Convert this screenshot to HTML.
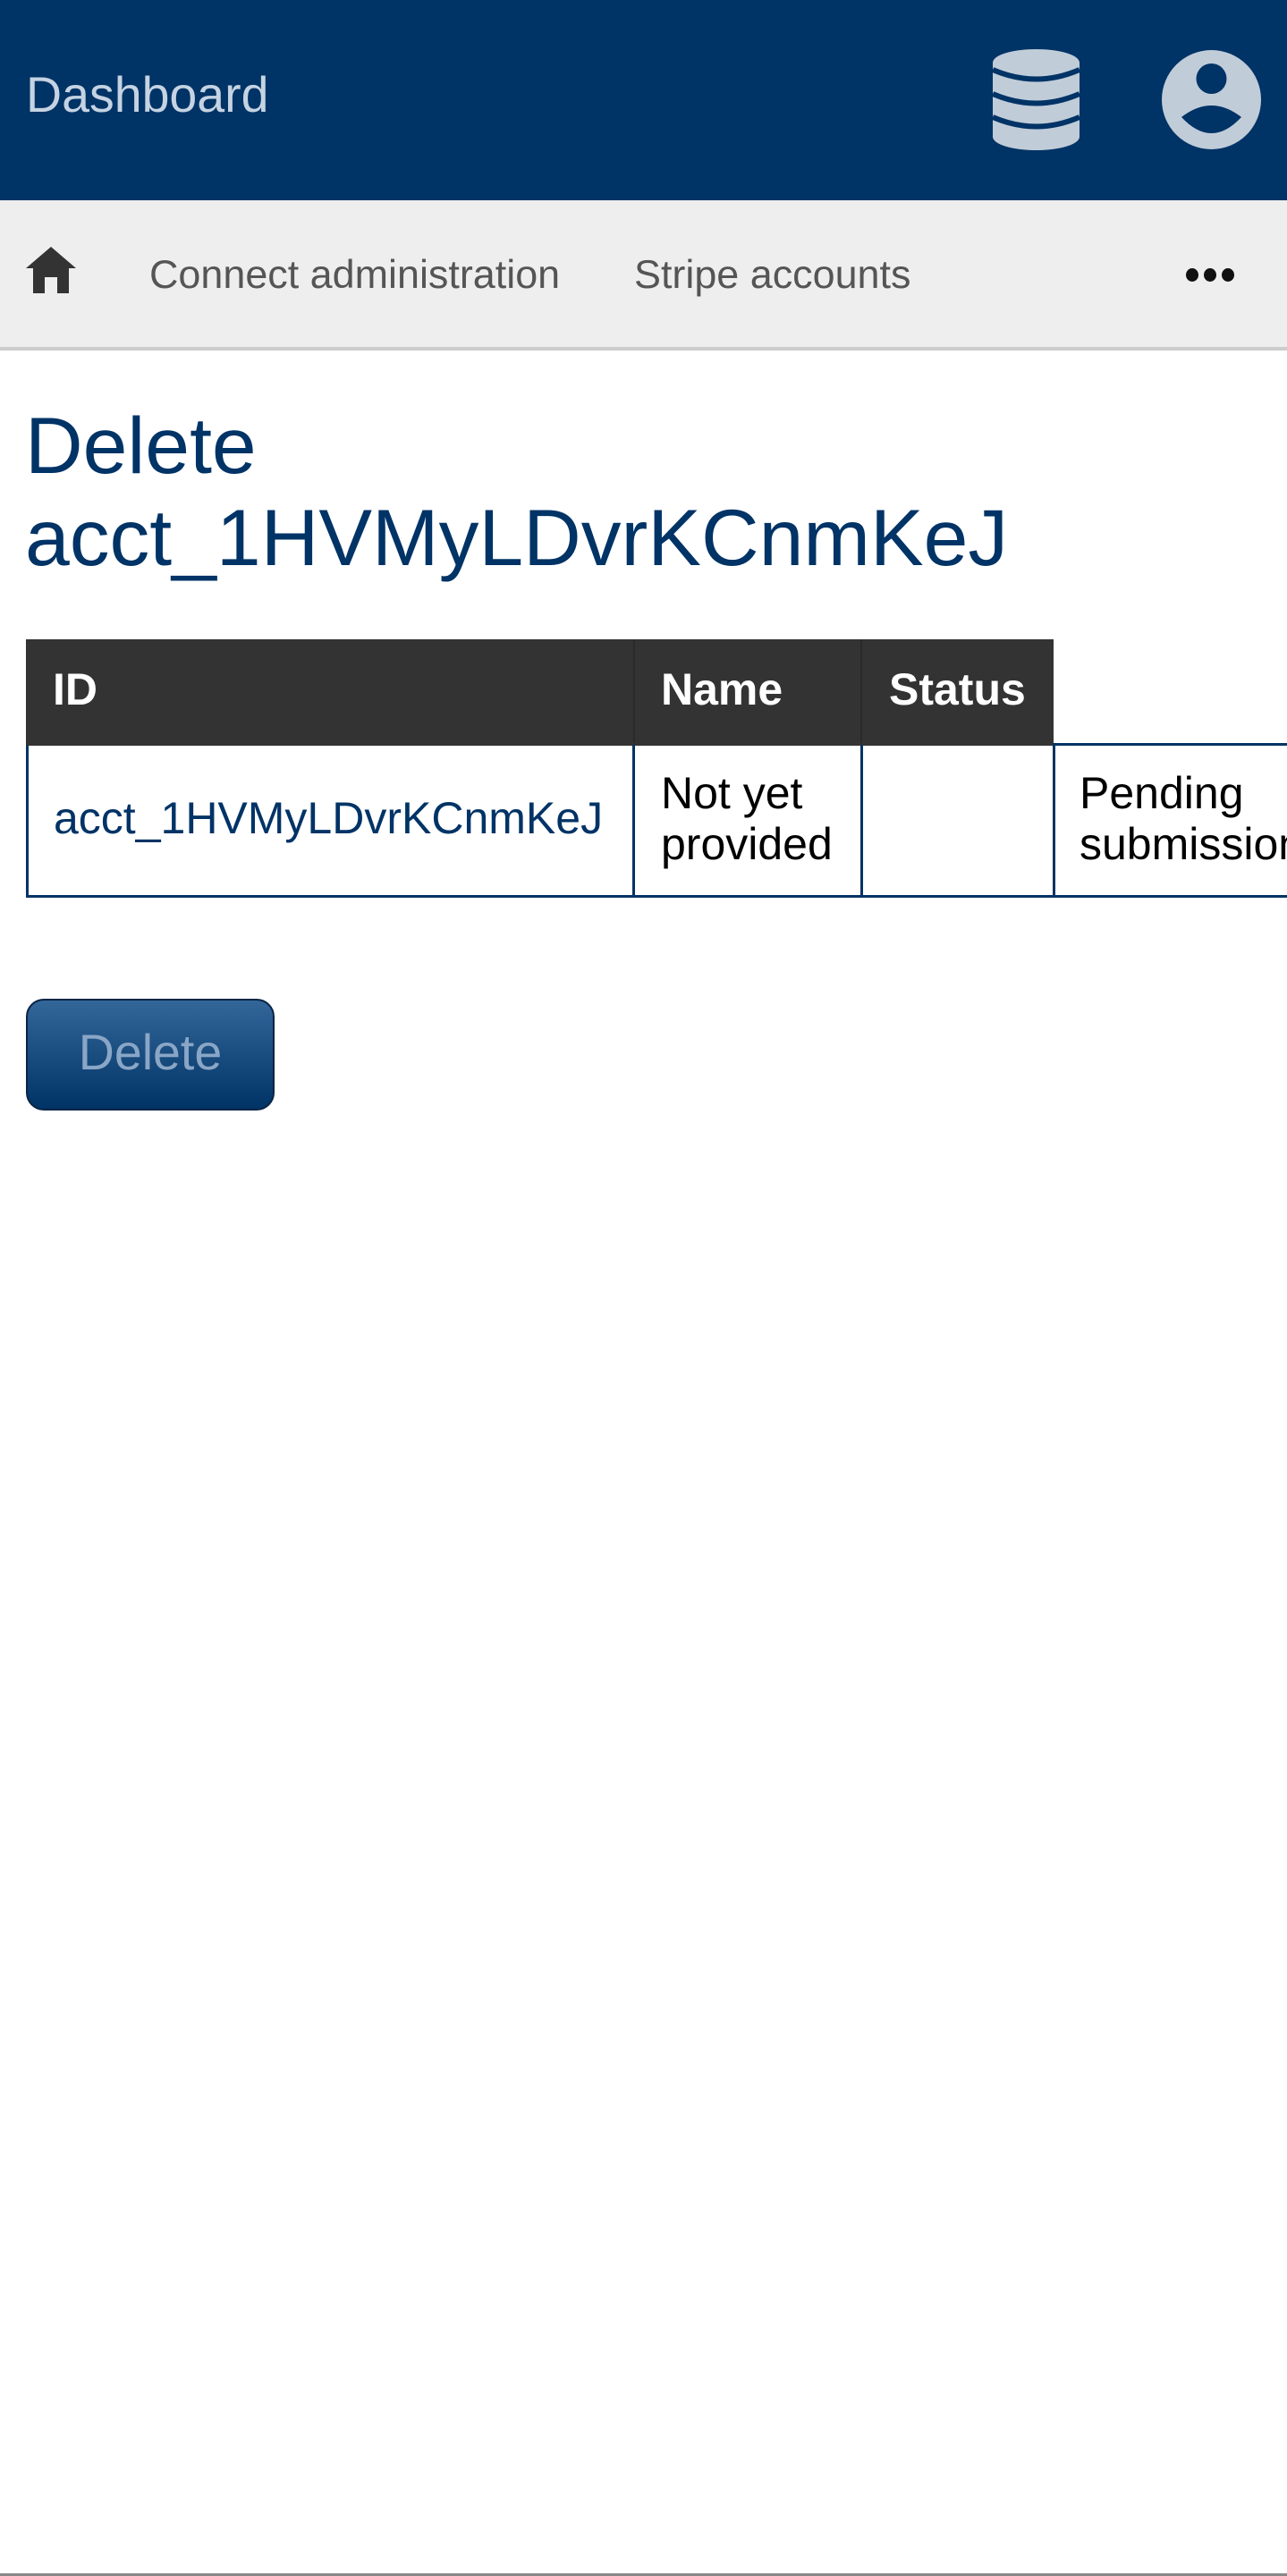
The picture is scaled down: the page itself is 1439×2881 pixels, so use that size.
<!DOCTYPE html>
<html><head><meta charset="utf-8"><style>
*{margin:0;padding:0;box-sizing:border-box}
body{width:1439px;height:2881px;position:relative;background:#fff;font-family:"Liberation Sans",sans-serif;overflow:hidden}
.a{position:absolute;white-space:nowrap}
</style></head><body>
<div class="a" style="left:0;top:0;width:1439px;height:224px;background:#003366"></div>
<div class="a" style="left:29px;top:74px;font-size:55.5px;line-height:64px;color:#c5d3e2">Dashboard</div>
<svg class="a" style="left:1110px;top:55px" width="97" height="113" viewBox="0 0 97 113">
<path d="M0 15 A48.5 15 0 0 1 97 15 V98 A48.5 15 0 0 1 0 98Z" fill="#c0ccd8"/>
<g fill="none" stroke="#003366" stroke-width="6">
<path d="M0 23 Q48.5 44 97 23"/>
<path d="M0 50 Q48.5 71 97 50"/>
<path d="M0 76 Q48.5 97 97 76"/>
</g></svg>
<svg class="a" style="left:1299px;top:55px" width="111" height="113" viewBox="0 0 111 113">
<circle cx="55.5" cy="56.5" r="55.5" fill="#c0ccd8"/>
<circle cx="55.5" cy="33" r="17" fill="#003366"/>
<path d="M22 76 Q55.5 50 89 76 Q55.5 112 22 76Z" fill="#003366"/>
</svg>
<div class="a" style="left:0;top:224px;width:1439px;height:168px;background:#eeeeee;border-bottom:4px solid #cccccc"></div>
<svg class="a" style="left:29px;top:276px" width="56" height="52" viewBox="0 0 56 52">
<path d="M28 0 L56 24 H48 V52 H35 V34 H21 V52 H8 V24 H0Z" fill="#333"/>
</svg>
<div class="a" style="left:167px;top:282px;font-size:44.9px;line-height:50px;color:#555">Connect administration</div>
<div class="a" style="left:709px;top:282px;font-size:44.9px;line-height:50px;color:#555">Stripe accounts</div>
<div class="a" style="left:1326px;top:300px">
<span style="position:absolute;left:0;top:0;width:14px;height:15px;border-radius:50%;background:#111"></span>
<span style="position:absolute;left:20px;top:0;width:14px;height:15px;border-radius:50%;background:#111"></span>
<span style="position:absolute;left:40px;top:0;width:14px;height:15px;border-radius:50%;background:#111"></span>
</div>
<div class="a" style="left:28px;top:447px;font-size:89.5px;line-height:103px;color:#003366">Delete<br>acct_1HVMyLDvrKCnmKeJ</div>
<!-- table -->
<div class="a" style="left:29px;top:715px;width:1149px;height:118px;background:#333"></div>
<div class="a" style="left:708px;top:715px;width:2px;height:118px;background:#2a2a2a"></div>
<div class="a" style="left:962px;top:715px;width:2px;height:118px;background:#2a2a2a"></div>
<div class="a" style="left:59px;top:743px;font-size:50px;line-height:56px;color:#fff;font-weight:bold">ID</div>
<div class="a" style="left:739px;top:743px;font-size:50px;line-height:56px;color:#fff;font-weight:bold">Name</div>
<div class="a" style="left:994px;top:743px;font-size:50px;line-height:56px;color:#fff;font-weight:bold">Status</div>
<div class="a" style="left:29px;top:831px;width:1420px;height:173px;border:3px solid #003366"></div>
<div class="a" style="left:29px;top:831px;width:1149px;height:3px;background:#333"></div>
<div class="a" style="left:707px;top:833px;width:3px;height:170px;background:#003366"></div>
<div class="a" style="left:962px;top:833px;width:3px;height:170px;background:#003366"></div>
<div class="a" style="left:1177px;top:831px;width:3px;height:172px;background:#003366"></div>
<div class="a" style="left:60px;top:887px;font-size:50px;line-height:56px;color:#003366">acct_1HVMyLDvrKCnmKeJ</div>
<div class="a" style="left:739px;top:859px;font-size:50px;line-height:57px;color:#000">Not yet<br>provided</div>
<div class="a" style="left:1207px;top:859px;font-size:50px;line-height:57px;color:#000">Pending<br>submission</div>
<div class="a" style="left:29px;top:1117px;width:278px;height:125px;border-radius:20px;border:2px solid #0a2545;background:linear-gradient(#336699,#003366);color:#8aa6c6;font-size:55.5px;line-height:117px;text-align:center">Delete</div>
<div class="a" style="left:0;top:2878px;width:1439px;height:3px;background:#888"></div>
</body></html>
